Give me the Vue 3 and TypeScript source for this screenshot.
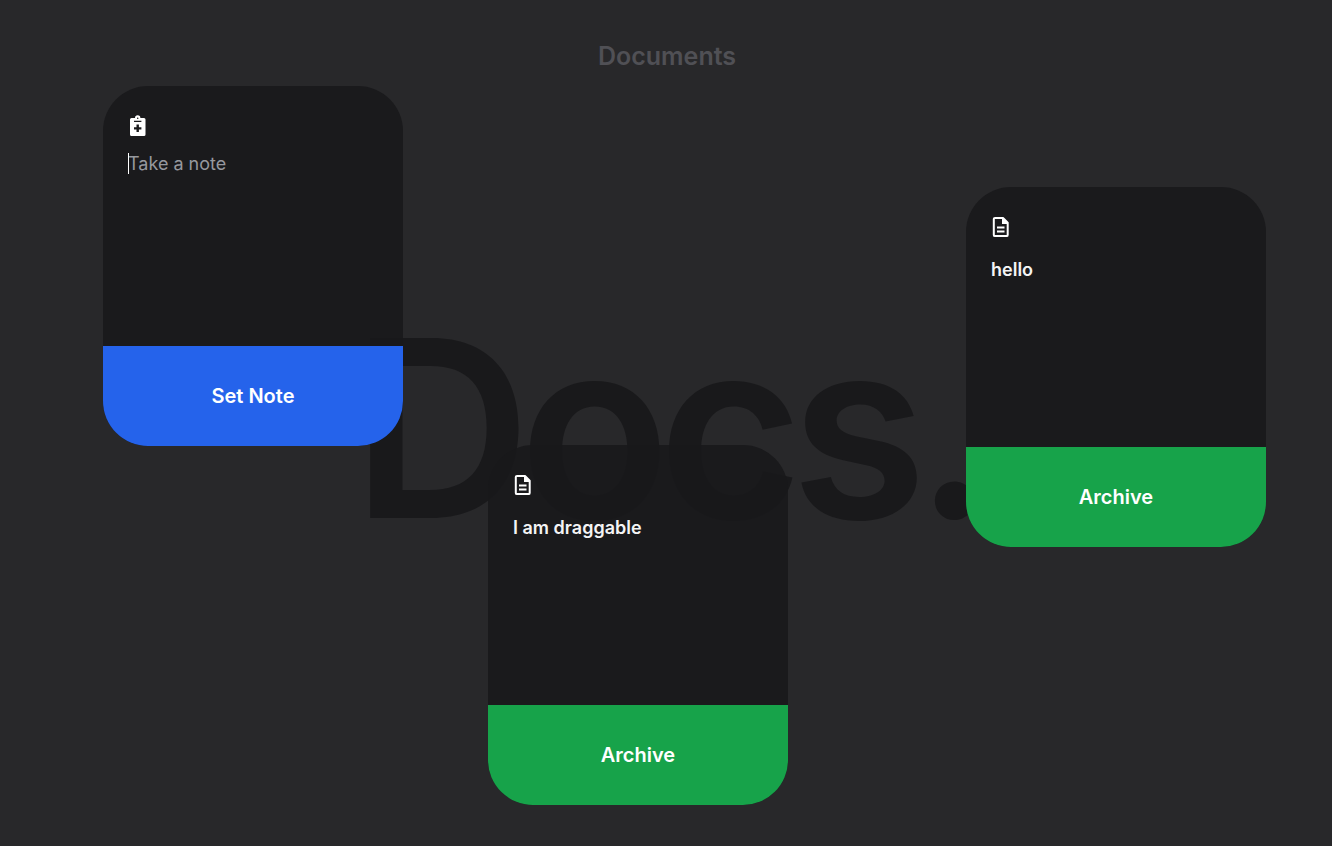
<script setup lang="ts">
import { ref } from 'vue'

interface Doc {
  id: number
  text: string
  x: number
  y: number
}

const note = ref('')
const docs = ref<Doc[]>([
  { id: 1, text: 'I am draggable', x: 488, y: 445 },
  { id: 2, text: 'hello', x: 966, y: 187 },
])

function addNote() {
  if (!note.value.trim()) return
  docs.value.push({ id: Date.now(), text: note.value, x: 120, y: 460 })
  note.value = ''
}

function archive(id: number) {
  docs.value = docs.value.filter((d) => d.id !== id)
}
</script>

<template>
  <main class="board">
    <h2 class="heading">Documents</h2>
    <h1 class="watermark">Docs.</h1>

    <form class="card composer" @submit.prevent="addNote">
      <div class="body">
        <svg class="icon" viewBox="0 0 20 20" fill="currentColor" aria-hidden="true">
          <path
            fill-rule="evenodd"
            d="M7 2a2.700 2.700 0 0 1 5.400 0H16a1.500 1.500 0 0 1 1.500 1.500v15A1.500 1.500 0 0 1 16 20H3.500A1.500 1.500 0 0 1 2 18.500v-15A1.500 1.500 0 0 1 3.500 2zM9.700 1.500a.8.8 0 1 0 0 1.600.8.8 0 0 0 0-1.600zM6 4.800v1.200h7.400V4.800zM8.500 8.600v2.600H6v2.400h2.500V16h2.400v-2.400h2.500v-2.400h-2.500V8.600z"
          />
        </svg>
        <textarea v-model="note" class="field" aria-label="Note" placeholder="Take a note"></textarea>
        <span v-if="!note" class="caret"></span>
      </div>
      <button class="action set" type="submit">Set Note</button>
    </form>

    <article
      v-for="doc in docs"
      :key="doc.id"
      class="card"
      :style="{ left: doc.x + 'px', top: doc.y + 'px' }"
    >
      <div class="body">
        <svg class="icon" viewBox="0 0 20 20" fill="none" stroke="currentColor" aria-hidden="true">
          <path
            d="M12 .9H4A1.200 1.200 0 0 0 2.800 2.100v15.800A1.200 1.200 0 0 0 4 19.100h11.500a1.200 1.200 0 0 0 1.200-1.200V5.800z"
            stroke-width="2"
            stroke-linejoin="round"
          />
          <path d="M11 .9V7h5.700V6L12 .9z" fill="currentColor" stroke="none" />
          <path d="M6 10.500h7.500M6 14.500h7.500" stroke-width="2" />
        </svg>
        <p class="text">{{ doc.text }}</p>
      </div>
      <button class="action archive" type="button" @click="archive(doc.id)">Archive</button>
    </article>
  </main>
</template>

<style>
body {
  margin: 0;
  background: #28282a;
}
</style>

<style scoped>
.board {
  position: relative;
  min-height: 100vh;
  overflow: hidden;
  background: #28282a;
  font-family: Inter, sans-serif;
  color: #fff;
}
.heading {
  margin: 0;
  padding: 40px 0 0 2px;
  font-size: 25px;
  line-height: 32px;
  font-weight: 600;
  text-align: center;
  color: #505055;
}
.watermark {
  position: absolute;
  inset: 0;
  display: grid;
  place-items: center;
  margin: 0;
  padding: 10px 0 0 2px;
  font-size: 248px;
  line-height: 1;
  font-weight: 600;
  letter-spacing: -12px;
  color: #19191b;
}
.card {
  position: absolute;
  display: flex;
  flex-direction: column;
  width: 300px;
  height: 360px;
  border-radius: 45px;
  overflow: hidden;
  background: rgba(24, 24, 27, 0.9);
}
.composer {
  left: 103px;
  top: 86px;
}
.body {
  position: relative;
  flex: 1;
  padding: 30px 25px 0;
}
.icon {
  display: block;
  width: 20px;
  height: 20px;
  overflow: visible;
}
.text {
  margin: 20px 0 0;
  font-size: 18px;
  line-height: 26px;
  font-weight: 600;
  color: #f4f4f5;
}
.field {
  display: block;
  width: 100%;
  height: 150px;
  margin-top: 14px;
  padding: 0;
  border: 0;
  outline: 0;
  resize: none;
  background: transparent;
  font: 400 18px/28px Inter, sans-serif;
  color: #fff;
}
.field::placeholder {
  color: #96989e;
}
.caret {
  position: absolute;
  left: 25px;
  top: 67px;
  width: 1px;
  height: 21px;
  background: #fff;
}
.action {
  height: 100px;
  border: 0;
  padding: 0;
  font: 600 20px/28px Inter, sans-serif;
  color: #fff;
  cursor: pointer;
}
.set {
  background: #2563eb;
}
.archive {
  background: #17a34a;
}
</style>
